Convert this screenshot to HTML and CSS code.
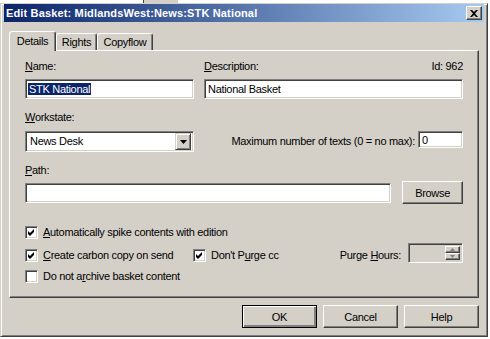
FILE: index.html
```html
<!DOCTYPE html>
<html lang="en">
<head>
    <meta charset="UTF-8">
    <title>Edit Basket</title>
    <link rel="stylesheet" href="styles.css">
</head>
<body>

<div class="desktop">
    <div class="behind">
        <span class="behind-cell"></span>
        <span class="behind-text">SIN 0 - Lichfield</span>
    </div>

    <div class="dialog">
        <div class="titlebar">
            <span class="title">Edit Basket: MidlandsWest:News:STK National</span>
            <button type="button" class="close-btn">
                <svg width="8" height="7" viewBox="0 0 8 7"><path d="M0 0h2l2 2 2-2h2L5 3.5 8 7H6L4 5 2 7H0l3-3.5z" fill="#000"/></svg>
            </button>
        </div>

        <div class="tabs">
            <div class="tab active tab-details">Details</div>
            <div class="tab tab-rights">Rights</div>
            <div class="tab tab-copyflow">Copyflow</div>
        </div>

        <div class="panel">
            <div class="grid-row">
                <div class="field">
                    <div class="label"><u>N</u>ame:</div>
                    <div class="textbox"><span class="selected">STK National</span></div>
                </div>
                <div class="field">
                    <div class="label label-split">
                        <span><u>D</u>escription:</span>
                        <span>Id: 962</span>
                    </div>
                    <div class="textbox">National Basket</div>
                </div>
            </div>

            <div class="grid-row row-workstate">
                <div class="field">
                    <div class="label"><u>W</u>orkstate:</div>
                    <div class="combo">
                        <span class="combo-text">News Desk</span>
                        <span class="combo-btn">
                            <svg width="7" height="4" viewBox="0 0 7 4"><path d="M0 0h7L3.5 4z" fill="#000"/></svg>
                        </span>
                    </div>
                </div>
                <div class="max-field">
                    <span>Maximum number of texts (0 = no max):</span>
                    <div class="textbox small">0</div>
                </div>
            </div>

            <div class="label label-path"><u>P</u>ath:</div>
            <div class="path-row">
                <div class="textbox path-box"></div>
                <button type="button" class="btn browse-btn">Browse</button>
            </div>

            <div class="check-row first">
                <span class="checkbox checked"><svg width="7" height="7" viewBox="0 0 7 7"><path d="M0 2l2 2 4-4v3L2 7 0 5z" fill="#000"/></svg></span>
                <span><u>A</u>utomatically spike contents with edition</span>
            </div>

            <div class="check-row second">
                <div class="check-group cc-group">
                    <span class="checkbox checked"><svg width="7" height="7" viewBox="0 0 7 7"><path d="M0 2l2 2 4-4v3L2 7 0 5z" fill="#000"/></svg></span>
                    <span><u>C</u>reate carbon copy on send</span>
                </div>
                <div class="check-group">
                    <span class="checkbox checked"><svg width="7" height="7" viewBox="0 0 7 7"><path d="M0 2l2 2 4-4v3L2 7 0 5z" fill="#000"/></svg></span>
                    <span>Don't P<u>u</u>rge cc</span>
                </div>
                <div class="purge-group">
                    <span>Purge <u>H</u>ours:</span>
                    <div class="spin">
                        <span class="spin-btns">
                            <span class="spin-btn"><svg width="5" height="3" viewBox="0 0 5 3"><path d="M2.5 0L5 3H0z" fill="#808080"/></svg></span>
                            <span class="spin-btn"><svg width="5" height="3" viewBox="0 0 5 3"><path d="M0 0h5L2.5 3z" fill="#808080"/></svg></span>
                        </span>
                    </div>
                </div>
            </div>

            <div class="check-row third">
                <span class="checkbox"></span>
                <span>Do not a<u>r</u>chive basket content</span>
            </div>
        </div>

        <div class="button-row">
            <button type="button" class="btn default-btn">OK</button>
            <button type="button" class="btn">Cancel</button>
            <button type="button" class="btn">Help</button>
        </div>
    </div>
</div>

</body>
</html>
```

FILE: styles.css
```css
body {
    margin: 0;
    background: #fff;
    font-family: "Liberation Sans", Arial, sans-serif;
    font-size: 11px;
    line-height: 13px;
    letter-spacing: -0.3px;
    color: #000;
}

.desktop {
    position: relative;
    width: 490px;
    height: 339px;
    overflow: hidden;
}

/* the window behind the dialog, only its bottom edge shows */
.behind {
    position: absolute;
    left: 0;
    top: -10px;
    display: flex;
    align-items: flex-end;
    height: 13px;
}

.behind-cell {
    width: 34px;
    height: 13px;
    margin-left: 143px;
    background: #d4d0c8;
    border-left: 1px solid #404040;
}

.behind-text {
    margin-left: 8px;
}

.dialog {
    position: absolute;
    left: 0;
    top: 3px;
    width: 488px;
    height: 334px;
    box-sizing: border-box;
    background: #d4d0c8;
    border: 1px solid;
    border-color: #d4d0c8 #404040 #404040 #d4d0c8;
    box-shadow: inset 1px 1px #fff, inset -1px -1px #808080;
    padding: 0 3px 3px 3px;
}

.titlebar {
    height: 18px;
    display: flex;
    align-items: center;
    justify-content: space-between;
    padding: 0 2px;
    background: linear-gradient(to right, #0a246a, #a6caf0);
}

.title {
    color: #fff;
    font-weight: bold;
    letter-spacing: 0.15px;
    white-space: nowrap;
}

.close-btn {
    width: 16px;
    height: 14px;
    padding: 0;
    box-sizing: border-box;
    display: flex;
    align-items: center;
    justify-content: center;
    background: #d4d0c8;
    border: 1px solid;
    border-color: #fff #404040 #404040 #fff;
    box-shadow: inset -1px -1px #808080;
}

.tabs {
    display: flex;
    align-items: flex-end;
    margin: 9px 0 0 5px;
    height: 19px;
}

.tab {
    height: 17px;
    box-sizing: border-box;
    text-align: center;
    padding-top: 2px;
    background: #d4d0c8;
    border: 1px solid;
    border-bottom: none;
    border-color: #fff #404040 transparent #fff;
    border-radius: 3px 3px 0 0;
    box-shadow: inset -1px 0 #808080;
}

.tab.active {
    position: relative;
    z-index: 1;
    height: 20px;
    margin-bottom: -1px;
    padding-top: 3px;
}

.tab-details { width: 47px; }
.tab-rights { width: 41px; }
.tab-copyflow { width: 56px; }

.panel {
    margin: 0 5px;
    height: 248px;
    box-sizing: border-box;
    border: 1px solid;
    border-color: #fff #404040 #404040 #fff;
    box-shadow: inset -1px -1px #808080;
    padding: 9px 15px 0 15px;
}

.grid-row {
    display: grid;
    grid-template-columns: 169px 259px;
    column-gap: 10px;
}

.label {
    height: 13px;
    white-space: nowrap;
}

.label-split {
    display: flex;
    justify-content: space-between;
}

.textbox {
    height: 20px;
    margin-top: 6px;
    box-sizing: border-box;
    background: #fff;
    border: 1px solid;
    border-color: #808080 #fff #fff #808080;
    box-shadow: inset 1px 1px #404040, inset -1px -1px #d4d0c8;
    padding: 3px 3px 0 3px;
    white-space: nowrap;
    overflow: hidden;
}

.selected {
    display: inline-block;
    background: #0a246a;
    color: #fff;
    line-height: 12px;
    padding: 0 1px;
    margin-left: -1px;
}

.row-workstate {
    margin-top: 12px;
    align-items: end;
}

.combo {
    height: 21px;
    margin-top: 7px;
    box-sizing: border-box;
    background: #fff;
    border: 1px solid;
    border-color: #808080 #fff #fff #808080;
    box-shadow: inset 1px 1px #404040, inset -1px -1px #d4d0c8;
    display: flex;
    align-items: center;
    padding: 2px;
}

.combo-text {
    flex: 1;
    padding-left: 2px;
}

.combo-btn {
    width: 16px;
    height: 17px;
    box-sizing: border-box;
    display: flex;
    align-items: center;
    justify-content: center;
    background: #d4d0c8;
    border: 1px solid;
    border-color: #d4d0c8 #404040 #404040 #d4d0c8;
    box-shadow: inset 1px 1px #fff, inset -1px -1px #808080;
}

.max-field {
    display: flex;
    justify-content: flex-end;
    align-items: center;
    gap: 3px;
    white-space: nowrap;
}

.textbox.small {
    width: 45px;
    height: 17px;
    margin-top: 0;
    padding-top: 2px;
    margin-bottom: 4px;
}

.label-path {
    margin-top: 12px;
}

.path-row {
    display: flex;
    align-items: flex-start;
    gap: 11px;
    margin-top: 4px;
}

.path-box {
    width: 367px;
    margin-top: 2px;
}

.btn {
    font-family: "Liberation Sans", Arial, sans-serif;
    font-size: 11px;
    letter-spacing: -0.3px;
    color: #000;
    height: 23px;
    width: 75px;
    padding: 0;
    box-sizing: border-box;
    background: #d4d0c8;
    border: 1px solid;
    border-color: #fff #404040 #404040 #fff;
    box-shadow: inset -1px -1px #808080;
}

.browse-btn {
    width: 61px;
}

.default-btn {
    border-color: #000;
    box-shadow: inset 1px 1px #fff, inset -2px -2px #808080, inset -1px -1px #404040;
}

.check-row {
    display: flex;
    align-items: center;
    height: 13px;
    white-space: nowrap;
}

.check-row.first { margin-top: 22px; }
.check-row.second { margin-top: 10px; }
.check-row.third { margin-top: 8px; }

.check-group {
    display: flex;
    align-items: center;
    gap: 5px;
}

.check-row.first,
.check-row.third {
    gap: 5px;
}

.cc-group {
    width: 168px;
}

.checkbox {
    width: 13px;
    height: 13px;
    box-sizing: border-box;
    background: #fff;
    border: 1px solid;
    border-color: #808080 #fff #fff #808080;
    box-shadow: inset 1px 1px #404040, inset -1px -1px #d4d0c8;
    display: flex;
    align-items: center;
    justify-content: center;
}

.purge-group {
    margin-left: auto;
    display: flex;
    align-items: flex-start;
    gap: 7px;
}

.spin {
    width: 55px;
    height: 20px;
    margin-top: -6px;
    margin-bottom: -1px;
    box-sizing: border-box;
    background: #d4d0c8;
    border: 1px solid;
    border-color: #808080 #fff #fff #808080;
    box-shadow: inset 1px 1px #404040, inset -1px -1px #d4d0c8;
    padding: 2px 2px 2px 0;
    display: flex;
    justify-content: flex-end;
}

.spin-btns {
    display: flex;
    flex-direction: column;
    width: 15px;
}

.spin-btn {
    height: 8px;
    box-sizing: border-box;
    display: flex;
    align-items: center;
    justify-content: center;
    border: 1px solid;
    border-color: #fff #404040 #404040 #fff;
    box-shadow: inset -1px -1px #808080;
}

.button-row {
    display: flex;
    justify-content: flex-end;
    gap: 6px;
    margin-top: 7px;
    padding-right: 5px;
}
```
